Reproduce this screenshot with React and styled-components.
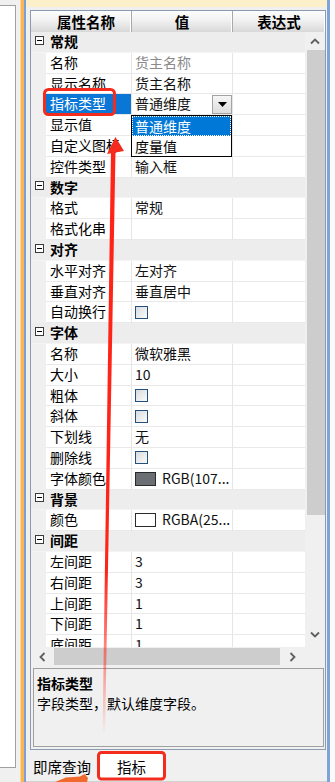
import React from "react";
import styled, { createGlobalStyle } from "styled-components";

const GlobalStyle = createGlobalStyle`
  html, body {
    margin: 0;
    padding: 0;
    background: #f0f0f0;
  }
  body {
    font-family: "Noto Sans CJK SC", "Noto Sans", sans-serif;
  }
`;

const rows = [
  { cat: "常规" },
  { name: "名称", value: "货主名称", muted: true },
  { name: "显示名称", value: "货主名称" },
  { name: "指标类型", value: "普通维度", selected: true, dropdown: true },
  { name: "显示值" },
  { name: "自定义图标" },
  { name: "控件类型", value: "输入框" },
  { cat: "数字" },
  { name: "格式", value: "常规" },
  { name: "格式化串" },
  { cat: "对齐" },
  { name: "水平对齐", value: "左对齐" },
  { name: "垂直对齐", value: "垂直居中" },
  { name: "自动换行", check: true },
  { cat: "字体" },
  { name: "名称", value: "微软雅黑" },
  { name: "大小", value: "10" },
  { name: "粗体", check: true },
  { name: "斜体", check: true },
  { name: "下划线", value: "无" },
  { name: "删除线", check: true },
  { name: "字体颜色", swatch: "#6b6e73", value: "RGB(107..." },
  { cat: "背景" },
  { name: "颜色", swatch: "#ffffff", value: "RGBA(25..." },
  { cat: "间距" },
  { name: "左间距", value: "3" },
  { name: "右间距", value: "3" },
  { name: "上间距", value: "1" },
  { name: "下间距", value: "1" },
  { name: "底间距", value: "1" },
];

function Chevron({ dir }) {
  const vertical = dir === "up" || dir === "down";
  const points = {
    up: "1,5.5 5,1.5 9,5.5",
    down: "1,1.5 5,5.5 9,1.5",
    left: "5.5,1 1.5,5 5.5,9",
    right: "1.5,1 5.5,5 1.5,9",
  }[dir];
  return (
    <svg
      width={vertical ? 10 : 7}
      height={vertical ? 7 : 10}
      viewBox={vertical ? "0 0 10 7" : "0 0 7 10"}
    >
      <polyline points={points} fill="none" stroke="#5f5f5f" strokeWidth="1.8" />
    </svg>
  );
}

function PropRow({ row }) {
  if (row.cat) {
    return (
      <CategoryRow>
        <Expander width="9" height="9" viewBox="0 0 9 9">
          <rect x="0.5" y="0.5" width="8" height="8" fill="#fff" stroke="#3a3a3a" />
          <line x1="2" y1="4.5" x2="7" y2="4.5" stroke="#000" />
        </Expander>
        <CatLabel>{row.cat}</CatLabel>
      </CategoryRow>
    );
  }

  return (
    <Row>
      <MarginCell />
      <NameCell $selected={row.selected}>{row.name}</NameCell>
      <ValueCell $muted={row.muted}>
        {row.check && <Checkbox />}
        {row.swatch && <Swatch $color={row.swatch} />}
        {row.value && <ValueText>{row.value}</ValueText>}
        {row.dropdown && (
          <>
            <DropButton>
              <svg width="9" height="5" viewBox="0 0 9 5">
                <polygon points="0,0 9,0 4.5,5" fill="#000" />
              </svg>
            </DropButton>
            <DropList>
              <DropItem $active>普通维度</DropItem>
              <DropItem>度量值</DropItem>
            </DropList>
          </>
        )}
      </ValueCell>
      <ExprCell />
    </Row>
  );
}

export default function App() {
  return (
    <>
      <GlobalStyle />
      <Screen>
        <LeftDock>
          <DockPanel />
        </LeftDock>
        <Splitter />
        <Window>
          <TopBand />
          <WindowBody>
            <Frame>
              <Header>
                <HeadCell $width="101px" $pad="10px">属性名称</HeadCell>
                <HeadCell $width="101px">值</HeadCell>
                <HeadCell $last>表达式</HeadCell>
              </Header>
              <GridBody>
                <RowList>
                  {rows.map((row, i) => (
                    <PropRow key={i} row={row} />
                  ))}
                </RowList>
                <VScroll>
                  <ScrollBtn $size="18px">
                    <Chevron dir="up" />
                  </ScrollBtn>
                  <VTrack>
                    <VThumb />
                  </VTrack>
                  <ScrollBtn $size="26px">
                    <Chevron dir="down" />
                  </ScrollBtn>
                </VScroll>
              </GridBody>
              <HScroll>
                <ScrollBtn $size="22px" $horizontal>
                  <Chevron dir="left" />
                </ScrollBtn>
                <HThumb />
                <ScrollBtn $size="25px" $horizontal>
                  <Chevron dir="right" />
                </ScrollBtn>
                <Corner />
              </HScroll>
              <Desc>
                <DescTitle>指标类型</DescTitle>
                <DescText>字段类型，默认维度字段。</DescText>
              </Desc>
            </Frame>
          </WindowBody>
          <TabStrip>
            <Tab $width="73px" $pad="7px">即席查询</Tab>
            <Tab $width="63px" $active>指标</Tab>
          </TabStrip>
        </Window>
        <RightEdge />

        <Overlay width="335" height="782" viewBox="0 0 335 782">
          <defs>
            <linearGradient id="fade" x1="0" y1="150" x2="0" y2="735" gradientUnits="userSpaceOnUse">
              <stop offset="0" stopColor="#ff2418" stopOpacity="1" />
              <stop offset="0.72" stopColor="#ff2418" stopOpacity="1" />
              <stop offset="0.88" stopColor="#ff2418" stopOpacity="0.45" />
              <stop offset="1" stopColor="#ff2418" stopOpacity="0" />
            </linearGradient>
          </defs>
          <rect x="44.5" y="89.5" width="70" height="25" rx="4" fill="none" stroke="#f42c1e" strokeWidth="3" />
          <rect x="98.5" y="752.5" width="66" height="26.5" rx="3" fill="none" stroke="#f42c1e" strokeWidth="3" />
          <polygon points="111,150 115.5,150 105,735 102.5,735" fill="url(#fade)" />
          <polygon points="115.5,137 107,154 124,151" fill="#f42c1e" />
          <polygon points="55,782 66,777.5 80,776.5 84.5,774 88,778 87,782" fill="#f06a2e" />
        </Overlay>
      </Screen>
    </>
  );
}

const Screen = styled.div`
  position: relative;
  display: flex;
  width: 335px;
  height: 782px;
  overflow: hidden;
  background: #f0f0f0;
  color: #000;
  font-size: 14px;
`;

const LeftDock = styled.div`
  flex: none;
  width: 17px;
  padding-top: 5px;
  box-sizing: border-box;
`;

const DockPanel = styled.div`
  width: 16px;
  height: 763px;
  box-sizing: border-box;
  background: #fff;
  border-top: 1px solid #a0a0a0;
  border-right: 1px solid #a0a0a0;
  border-bottom: 1px solid #a0a0a0;
`;

const Splitter = styled.div`
  flex: none;
  width: 9px;
  background: linear-gradient(
    to right,
    #f0f0f0 0 3px,
    #fcd59f 3px 4px,
    #f9b653 4px 7px,
    #7d9fd2 7px 9px
  );
`;

const Window = styled.div`
  flex: none;
  width: 301px;
  display: flex;
  flex-direction: column;
`;

const TopBand = styled.div`
  height: 7px;
  background: #fcf0ca;
`;

const WindowBody = styled.div`
  padding: 3px 1px 0 4px;
`;

const Frame = styled.div`
  width: 296px;
  height: 740px;
  box-sizing: border-box;
  border: 1px solid #8a9ab0;
  display: flex;
  flex-direction: column;
  background: #f0f0f0;
`;

const Header = styled.div`
  flex: none;
  height: 21px;
  display: flex;
`;

const HeadCell = styled.div`
  flex: ${(p) => (p.$last ? "1" : "none")};
  width: ${(p) => p.$width || "auto"};
  box-sizing: border-box;
  padding-left: ${(p) => p.$pad || "0"};
  display: flex;
  align-items: center;
  justify-content: center;
  background: linear-gradient(#fdfdfd, #f1f1f1 45%, #d8d8d8);
  border-right: ${(p) => (p.$last ? "none" : "1px solid #a9a9a9")};
  box-shadow: inset -1px 0 0 #fff;
  font-weight: bold;
  font-size: 14.5px;
  line-height: 20px;
`;

const GridBody = styled.div`
  flex: none;
  height: 615px;
  display: flex;
`;

const RowList = styled.div`
  width: 274px;
  overflow: hidden;
  background: #fff;
`;

const Row = styled.div`
  display: grid;
  grid-template-columns: 15px 86px 101px 72px;
  height: 20.8px;
`;

const Cell = styled.div`
  box-sizing: border-box;
  border-bottom: 1px solid #e9e9e9;
  white-space: nowrap;
  overflow: hidden;
  line-height: 19.8px;
`;

const MarginCell = styled.div`
  background: #f0f0f0;
`;

const NameCell = styled(Cell)`
  padding-left: 4px;
  border-right: 1px solid #e6e6e6;
  background: ${(p) => (p.$selected ? "#0a77d6" : "#fff")};
  color: ${(p) => (p.$selected ? "#fff" : "#000")};
`;

const ValueCell = styled(Cell)`
  position: relative;
  overflow: visible;
  display: flex;
  align-items: center;
  padding-left: 3px;
  border-right: 1px solid #e6e6e6;
  color: ${(p) => (p.$muted ? "#8a8a8a" : "#111")};
`;

const ValueText = styled.span`
  flex: 1;
  overflow: hidden;
`;

const ExprCell = styled(Cell)``;

const CategoryRow = styled.div`
  height: 20.8px;
  display: flex;
  align-items: center;
  background: #ededed;
  box-sizing: border-box;
  border-bottom: 1px solid #f4f4f4;
`;

const Expander = styled.svg`
  flex: none;
  margin: -3px 0 0 4px;
`;

const CatLabel = styled.span`
  margin-left: 6px;
  font-weight: bold;
  line-height: 19.8px;
`;

const Checkbox = styled.span`
  width: 13px;
  height: 13px;
  box-sizing: border-box;
  border: 1px solid #24507c;
  background: linear-gradient(135deg, #d9dadc, #fbfbfb);
`;

const Swatch = styled.span`
  flex: none;
  width: 21px;
  height: 14px;
  margin-right: 6px;
  box-sizing: border-box;
  border: 1px solid #2a2a2a;
  background: ${(p) => p.$color};
`;

const DropButton = styled.span`
  flex: none;
  width: 20px;
  height: 19px;
  box-sizing: border-box;
  display: flex;
  align-items: center;
  justify-content: center;
  border: 1px solid #a3a3a3;
  background: linear-gradient(#f6f6f6, #dddddd);
`;

const DropList = styled.div`
  position: absolute;
  z-index: 2;
  top: calc(100% + 1px);
  left: -1px;
  width: 101px;
  box-sizing: border-box;
  border: 1px solid #000;
  background: #fff;
`;

const DropItem = styled.div`
  height: 20px;
  box-sizing: border-box;
  padding-left: 2px;
  line-height: 18px;
  border: 1px dotted ${(p) => (p.$active ? "#fff" : "transparent")};
  background: ${(p) => (p.$active ? "#0078d7" : "#fff")};
  color: ${(p) => (p.$active ? "#fff" : "#000")};
`;

const VScroll = styled.div`
  width: 20px;
  display: flex;
  flex-direction: column;
  background: #f0f0f0;
`;

const ScrollBtn = styled.div`
  flex: none;
  ${(p) => (p.$horizontal ? "width" : "height")}: ${(p) => p.$size};
  display: flex;
  align-items: center;
  justify-content: center;
`;

const VTrack = styled.div`
  flex: 1;
  padding-left: 2px;
`;

const VThumb = styled.div`
  height: 465px;
  background: #cdcdcd;
`;

const HScroll = styled.div`
  flex: none;
  height: 20px;
  display: flex;
  background: #f0f0f0;
`;

const HThumb = styled.div`
  flex: none;
  width: 226px;
  height: 17px;
  margin: 1px 0 0 1px;
  background: #cdcdcd;
`;

const Corner = styled.div`
  flex: none;
  width: 20px;
`;

const Desc = styled.div`
  flex: 1;
  margin: 1px 1px 2px 2px;
  padding: 4px 3px;
  box-sizing: border-box;
  border: 1px solid #a0a0a0;
  background: #f0f0f0;
`;

const DescTitle = styled.div`
  font-weight: bold;
  line-height: 20px;
`;

const DescText = styled.div`
  line-height: 20px;
`;

const TabStrip = styled.div`
  flex: 1;
  display: flex;
  align-items: flex-start;
  padding-top: 3px;
  box-sizing: border-box;
  border-bottom: 1px solid #d2d2d2;
`;

const Tab = styled.div`
  width: ${(p) => p.$width};
  height: 27px;
  box-sizing: border-box;
  padding-left: ${(p) => p.$pad || "0"};
  margin-left: ${(p) => (p.$active ? "1px" : "0")};
  display: flex;
  align-items: center;
  justify-content: ${(p) => (p.$active ? "center" : "flex-start")};
  background: ${(p) => (p.$active ? "#fff" : "transparent")};
  font-size: 14.5px;
`;

const RightEdge = styled.div`
  flex: 1;
  background: linear-gradient(to right, #7ea3d6 0 3px, #fafafa 3px);
`;

const Overlay = styled.svg`
  position: absolute;
  top: 0;
  left: 0;
  pointer-events: none;
`;
